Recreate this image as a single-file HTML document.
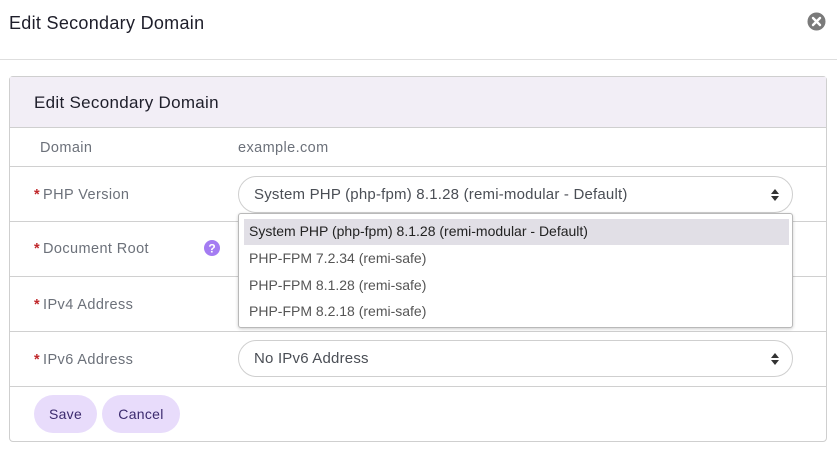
<!DOCTYPE html>
<html><head><style>
*{box-sizing:border-box;margin:0;padding:0}
body{width:837px;height:454px;background:#fff;font-family:"Liberation Sans",sans-serif;position:relative;overflow:hidden;color:#212529}
.abs{position:absolute}
.title{left:9px;top:13px;font-size:18px;color:#1e1e2a;letter-spacing:0.3px}
.hline{left:0;top:59px;width:837px;height:1px;background:#dedede}
.card{left:9px;top:76px;width:818px;height:366px;border:1px solid #cfcfcf;border-radius:4px}
.ch{left:10px;top:77px;width:816px;height:51px;background:#f2eef6;border-bottom:1px solid #cfcfcf}
.ch span{position:absolute;left:24px;top:16px;font-size:17px;color:#1e1e2a;letter-spacing:0.3px}
.row{left:10px;width:816px;height:1px;background:#d0d0d0}
.lbl{font-size:14.5px;color:#6c717a;letter-spacing:0.4px}
.star{color:#c0282b;font-weight:bold;margin-right:3px}
.sel{left:238px;width:555px;height:37px;border:1px solid #cfcfcf;border-radius:19px;font-size:15px;letter-spacing:0.2px;color:#4a4e55;padding:9px 0 0 15px}
.arr{position:absolute;right:13px;top:11px;width:8px;height:14px}
.dd{left:238px;top:213px;width:555px;height:115px;border:1px solid #b9b9b9;border-radius:3px;background:#fff;box-shadow:0 1px 3px rgba(0,0,0,.2);font-size:14px;color:#555}
.it{position:absolute;left:10px}
.btn{top:395px;height:38px;border-radius:19px;background:#e8dcfb;color:#3b2a6e;font-size:14px;letter-spacing:0.3px;padding-top:11px;text-align:center}
</style></head><body>
<div class="abs title">Edit Secondary Domain</div>
<svg class="abs" style="left:807px;top:12px" width="19" height="19" viewBox="0 0 19 19"><circle cx="9.5" cy="9.5" r="9" fill="#7a7a7a"/><path d="M6 6L13 13M13 6L6 13" stroke="#fff" stroke-width="2.4" stroke-linecap="round"/></svg>
<div class="abs hline"></div>
<div class="abs card"></div>
<div class="abs ch"><span>Edit Secondary Domain</span></div>
<div class="abs lbl" style="left:40px;top:140px">Domain</div>
<div class="abs lbl" style="left:238px;top:140px">example.com</div>
<div class="abs row" style="top:166px"></div>
<div class="abs lbl" style="left:34px;top:187px"><span class="star">*</span>PHP Version</div>
<div class="abs sel" style="top:176px">System PHP (php-fpm) 8.1.28 (remi-modular - Default)<svg class="arr" viewBox="0 0 8 14"><path d="M0 6L4 1L8 6Z M0 8L4 13L8 8Z" fill="#333"/></svg></div>
<div class="abs row" style="top:221px"></div>
<div class="abs lbl" style="left:34px;top:241px"><span class="star">*</span>Document Root</div>
<svg class="abs" style="left:204px;top:240px" width="16" height="16" viewBox="0 0 16 16"><circle cx="8" cy="8" r="8" fill="#a47cf2"/><text x="8" y="12.5" font-size="12" font-weight="bold" fill="#fff" text-anchor="middle" font-family="Liberation Sans">?</text></svg>
<div class="abs row" style="top:276px"></div>
<div class="abs lbl" style="left:34px;top:297px"><span class="star">*</span>IPv4 Address</div>
<div class="abs row" style="top:331px"></div>
<div class="abs lbl" style="left:34px;top:352px"><span class="star">*</span>IPv6 Address</div>
<div class="abs sel" style="top:340px">No IPv6 Address<svg class="arr" viewBox="0 0 8 14"><path d="M0 6L4 1L8 6Z M0 8L4 13L8 8Z" fill="#333"/></svg></div>
<div class="abs row" style="top:386px"></div>
<div class="abs dd">
<div style="position:absolute;left:5px;top:5px;width:545px;height:26px;background:#e1dfe6"></div>
<div class="it" style="top:9px;color:#222">System PHP (php-fpm) 8.1.28 (remi-modular - Default)</div>
<div class="it" style="top:36px">PHP-FPM 7.2.34 (remi-safe)</div>
<div class="it" style="top:63px">PHP-FPM 8.1.28 (remi-safe)</div>
<div class="it" style="top:89px">PHP-FPM 8.2.18 (remi-safe)</div>
</div>
<div class="abs btn" style="left:34px;width:63px">Save</div>
<div class="abs btn" style="left:102px;width:78px">Cancel</div>
</body></html>
